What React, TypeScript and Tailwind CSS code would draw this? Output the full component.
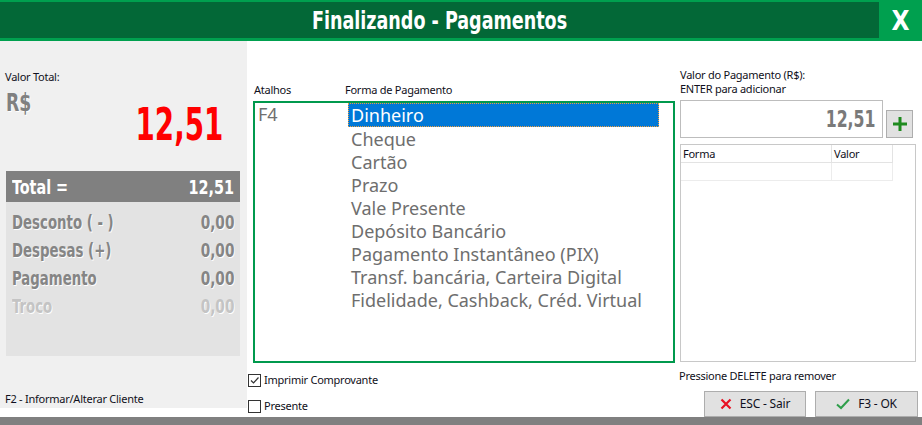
import React from "react";

const cond =
  "font-['DejaVu_Sans_Condensed','DejaVu_Sans',sans-serif] font-bold font-stretch-condensed";
const ui = "font-['Noto_Sans','Open_Sans',sans-serif]";
const small = "text-[11px] tracking-[-0.25px] text-[#101020]";

function Sq({ children, className = "" }: { children: React.ReactNode; className?: string }) {
  return <span className={`inline-block whitespace-nowrap ${className}`}>{children}</span>;
}

const items = [
  "Dinheiro",
  "Cheque",
  "Cartão",
  "Prazo",
  "Vale Presente",
  "Depósito Bancário",
  "Pagamento Instantâneo (PIX)",
  "Transf. bancária, Carteira Digital",
  "Fidelidade, Cashback, Créd. Virtual",
];

const rows: { label: string; value: string; light?: boolean }[] = [
  { label: "Desconto ( - )", value: "0,00" },
  { label: "Despesas (+)", value: "0,00" },
  { label: "Pagamento", value: "0,00" },
  { label: "Troco", value: "0,00", light: true },
];

export default function App() {
  return (
    <div className={`w-[922px] h-[425px] flex flex-col bg-white overflow-hidden ${ui}`}>
      {/* Title bar */}
      <div className="h-[41px] flex bg-[#00a04f] shrink-0">
        <div className="flex-1 mt-[2px] h-[36px] bg-[#036837] flex items-center justify-center">
          <Sq className={`${cond} text-white text-[25px] leading-none scale-x-[0.78] origin-center`}>
            Finalizando - Pagamentos
          </Sq>
        </div>
        <div className="w-[43px] flex items-center justify-center">
          <Sq className={`${cond} text-white text-[26px] leading-none`}>X</Sq>
        </div>
      </div>

      {/* Body */}
      <div className="flex h-[376px] shrink-0">
        {/* Left panel */}
        <div className="w-[247px] h-[367px] bg-[#f0f0f0] flex flex-col shrink-0">
          <div className="h-[130px] px-[5px] flex flex-col">
            <div className={`mt-[29px] leading-[14px] ${small}`}>Valor Total:</div>
            <div className="flex justify-between items-start">
              <Sq
                className={`${cond} text-[24px] leading-[24px] text-[#808080] [text-shadow:1px_1px_0_#fff] scale-x-[0.8] origin-left ml-px mt-[7px]`}
              >
                R$
              </Sq>
              <Sq
                className={`${cond} text-[44px] leading-[44px] text-[#ff0000] scale-x-[0.7] origin-right mt-[19px] mr-[19px]`}
              >
                12,51
              </Sq>
            </div>
          </div>
          <div className="mx-[6px] w-[234px]">
            <div className="h-[31px] bg-[#808080] flex items-center justify-between px-[6px]">
              <Sq className={`${cond} text-white text-[20px] leading-none scale-x-[0.8] origin-left`}>Total =</Sq>
              <Sq className={`${cond} text-white text-[20px] leading-none scale-x-[0.8] origin-right`}>12,51</Sq>
            </div>
            <div className="h-[154px] bg-[#e3e3e3] pt-[6px] px-[6px]">
              {rows.map((r) => (
                <div key={r.label} className="h-[28px] flex items-center justify-between">
                  <Sq
                    className={`${cond} text-[20px] leading-none scale-x-[0.74] origin-left [text-shadow:1px_1px_0_#fff] ${
                      r.light ? "text-[#c4c4c4]" : "text-[#858585]"
                    }`}
                  >
                    {r.label}
                  </Sq>
                  <Sq
                    className={`${cond} text-[20px] leading-none scale-x-[0.76] origin-right [text-shadow:1px_1px_0_#fff] ${
                      r.light ? "text-[#c4c4c4]" : "text-[#858585]"
                    }`}
                  >
                    {r.value}
                  </Sq>
                </div>
              ))}
            </div>
          </div>
          <div className={`mt-auto mb-[2px] px-[5px] leading-[14px] ${small}`}>F2 - Informar/Alterar Cliente</div>
        </div>

        {/* Middle */}
        <div className="w-[429px] pl-[6px] flex flex-col shrink-0">
          <div className={`mt-[42px] h-[14px] flex leading-[14px] ${small}`}>
            <span className="w-[92px] pl-px">Atalhos</span>
            <span>Forma de Pagamento</span>
          </div>
          <div className="mt-[4px] h-[262px] w-[422px] border-2 border-[#00994d] flex">
            <div className="w-[93px] pl-[3px] text-[18px] leading-[23px] text-[#707070]">F4</div>
            <div className="w-[311px] flex flex-col">
              {items.map((it, i) => (
                <div
                  key={it}
                  className={`h-[23px] pl-[2px] text-[18px] leading-[22px] whitespace-nowrap ${
                    i === 0
                      ? "bg-[#0078d7] text-white border border-dotted border-[#f0a040] h-[24px]"
                      : "text-[#6e6e6e] border border-transparent"
                  }`}
                >
                  {it}
                </div>
              ))}
            </div>
          </div>
          <label className={`mt-[10px] flex items-center gap-[3px] leading-[14px] -ml-[5px] ${small}`}>
            <span className="w-[13px] h-[13px] border border-[#333] bg-white flex items-center justify-center">
              <svg width="11" height="11" viewBox="0 0 11 11">
                <path d="M2 5.5 L4.5 8 L9.5 2.5" fill="none" stroke="#333" strokeWidth="1.2" />
              </svg>
            </span>
            Imprimir Comprovante
          </label>
          <label className={`mt-[12px] flex items-center gap-[3px] leading-[14px] -ml-[5px] ${small}`}>
            <span className="w-[13px] h-[13px] border border-[#333] bg-white" />
            Presente
          </label>
        </div>

        {/* Right */}
        <div className="flex-1 pl-[4px] pr-[6px] flex flex-col">
          <div className={`mt-[27px] leading-[14px] ${small}`}>
            <div>Valor do Pagamento (R$):</div>
            <div>ENTER para adicionar</div>
          </div>
          <div className="mt-[4px] flex items-end gap-[3px]">
            <div className="w-[203px] h-[38px] border border-[#bdbdbd] flex items-center justify-end pr-[7px]">
              <Sq className={`${cond} text-[23px] leading-none text-[#7a7a7a] scale-x-[0.76] origin-right`}>12,51</Sq>
            </div>
            <div className="w-[27px] h-[28px] bg-[#e1e1e1] border border-[#adadad] flex items-center justify-center">
              <svg width="14" height="14" viewBox="0 0 14 14">
                <rect x="5.5" y="0" width="3" height="14" fill="#1e8a1e" />
                <rect x="0" y="5.5" width="14" height="3" fill="#1e8a1e" />
              </svg>
            </div>
          </div>
          <div className="mt-[6px] w-[236px] h-[218px] border border-[#c8c8c8] bg-white">
            <div className={`flex h-[18px] leading-[17px] ${small}`}>
              <div className="w-[151px] pl-[2px] border-r border-b border-[#e3e3e3]">Forma</div>
              <div className="w-[61px] pl-[2px] border-r border-b border-[#e3e3e3]">Valor</div>
            </div>
            <div className="flex h-[18px]">
              <div className="w-[151px] border-r border-b border-[#ececec]" />
              <div className="w-[61px] border-r border-b border-[#ececec]" />
            </div>
          </div>
          <div className={`mt-[7px] -ml-px leading-[14px] ${small}`}>Pressione DELETE para remover</div>
          <div className="mt-auto flex gap-[9px] pl-[24px]">
            <button className="w-[102px] h-[26px] bg-[#e1e1e1] border border-[#adadad] flex items-center justify-center gap-[8px] text-[12px] tracking-[-0.2px] text-[#101020]">
              <svg width="12" height="12" viewBox="0 0 12 12">
                <path d="M1.5 1.5 L10.5 10.5 M10.5 1.5 L1.5 10.5" stroke="#e81123" strokeWidth="2.2" />
              </svg>
              ESC - Sair
            </button>
            <button className="w-[103px] h-[26px] bg-[#e1e1e1] border border-[#adadad] flex items-center justify-center gap-[8px] text-[12px] tracking-[-0.2px] text-[#101020]">
              <svg width="14" height="12" viewBox="0 0 14 12">
                <path d="M1 6.5 L5 10 L13 1.5" fill="none" stroke="#2e9e4a" strokeWidth="2" />
              </svg>
              F3 - OK
            </button>
          </div>
        </div>
      </div>

      <div className="flex-1 bg-[#808080]" />
    </div>
  );
}
